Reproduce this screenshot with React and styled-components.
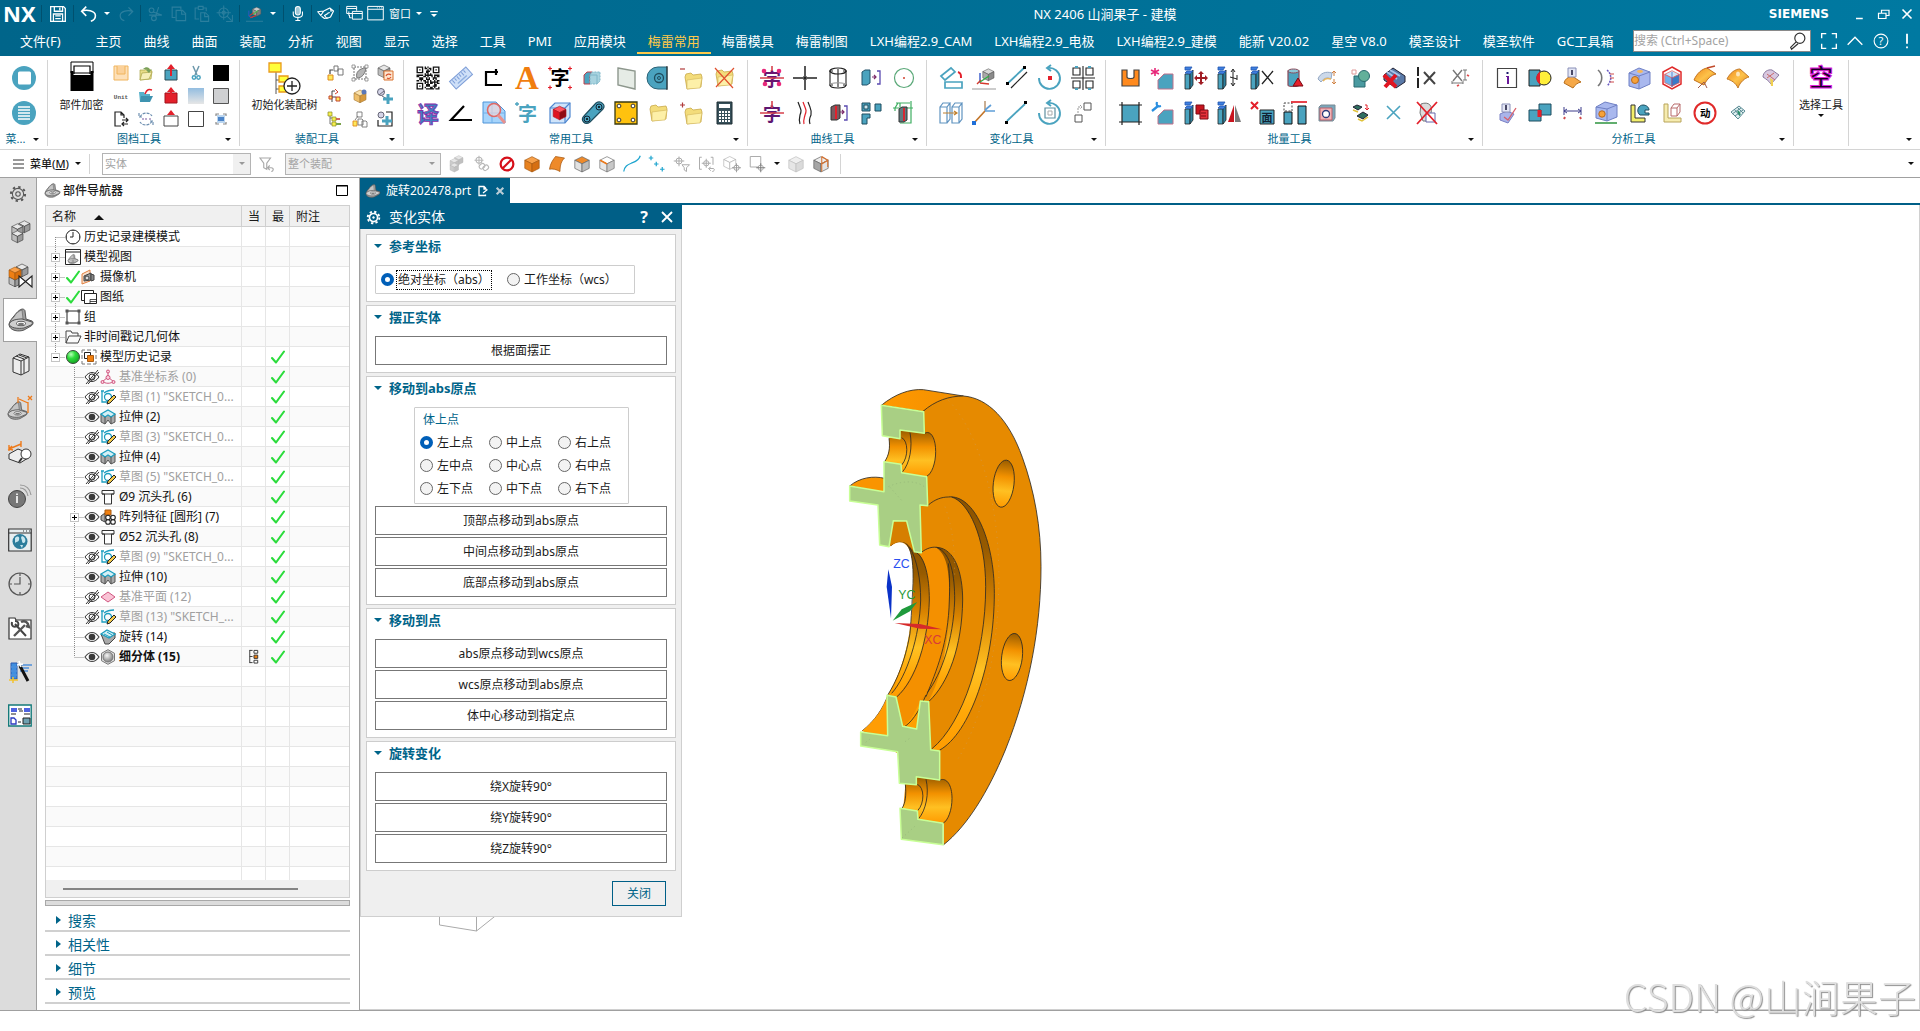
import React from "react";
import styled, { createGlobalStyle, css } from "styled-components";

const sans = `"Noto Sans", "Noto Sans CJK SC", sans-serif`;
const T = "#4aa3bf";
const K = "#222";
const R = "#e3202b";
const DEEP = "#005f87";

const Global = createGlobalStyle`
  *, *::before, *::after { box-sizing: border-box; }
  html, body { margin: 0; height: 100%; background: #fff; }
  body { font: 12px/16px ${sans}; color: #1a1a1a; overflow: hidden; }
  button, input, select { font: inherit; color: inherit; margin: 0; }
  svg { display: block; flex: none; }
`;

/* ---------- drawing helpers ---------- */

const Cube = ({ top = "#e8e8e8", left = "#bdbdbd", right = "#9a9a9a", line = "#555", t }) => (
  <g transform={t} stroke={line} strokeWidth="0.8" strokeLinejoin="round">
    <path d="M12 4l8 4-8 4-8-4z" fill={top} />
    <path d="M4 8l8 4v9l-8-4z" fill={left} />
    <path d="M20 8l-8 4v9l8-4z" fill={right} />
  </g>
);

const Slab = () => (
  <g stroke="#222" strokeWidth="0.8">
    <path d="M1 8h5v15H1z" fill={T} />
    <path d="M6 8l3-4v15l-3 4z" fill="#2c7f9c" />
    <path d="M1 1h7l-2 3H1z M1 7l2-2h6L6 8z" fill="#3e7fe0" stroke="#2257b0" />
  </g>
);

const Folder = ({ t }) => (
  <g transform={t}>
    <path d="M4 9l1-3 5-1 2 2 8-1 1 3-1 10-14 2z" fill="#f3dc7a" stroke="#c9a94a" strokeWidth="0.8" />
    <path d="M6 12l15-2-2 10-13 1z" fill="#fdf0a8" stroke="#d2b65a" strokeWidth="0.6" />
  </g>
);

const qrCells = [];
for (let y = 0; y < 17; y += 1) {
  for (let x = 0; x < 17; x += 1) {
    const inFinder = (x < 6 && y < 6) || (x > 10 && y < 6) || (x < 6 && y > 10);
    if (!inFinder && (x * 7 + y * 11 + x * y * 3) % 5 < 3 && (x + y * 2) % 7 !== 3) {
      qrCells.push(`M${x} ${y}h1v1h-1z`);
    }
  }
}
const finder = (x, y) => `M${x} ${y}h5v5h-5z M${x + 1} ${y + 1}v3h3v-3z M${x + 2} ${y + 2}h1v1h-1z`;

const Bracket3d = ({ t }) => (
  <g transform={t} stroke="#4a4a4a" strokeWidth="0.9" strokeLinejoin="round">
    <path d="M0 17c0-3 3-7 5-9 3-4 5-6 8-7 2 0 3 1 3 2l1 8 6 2c2 1 1 4-1 5l-7 4c-5 2-14 1-15-5z" fill="#a0a0a0" />
    <path d="M5 9c2-4 5-6 8-7l1 9-8 1c-2 0-3 1-5 3 0-2 2-4 4-6z" fill="#c4c4c4" strokeWidth="0.5" />
    <path d="M0 16c2-4 8-5 13-5l10 3c1 1 0 2-1 3l-7 3c-6 1-14 0-15-4z" fill="#cfcfcf" />
    <ellipse cx="12" cy="15.500" rx="4.500" ry="2.200" fill="#fff" />
    <ellipse cx="12" cy="16" rx="3" ry="1.300" fill="#777" stroke="none" />
  </g>
);

const glyph = (ch, x, y, size, fill, extra) => (
  <text x={x} y={y} fontSize={size} fill={fill} fontFamily='"Noto Sans CJK SC", sans-serif' fontWeight="700" {...extra}>
    {ch}
  </text>
);

const I = {
  /* title bar */
  save: <g fill="none" stroke="#fff" strokeWidth="1.4"><path d="M4 4h14l2 2v14H4z" /><path d="M8 4v5h9V4M14 5v3M7 20v-8h10v8M9 14h6M9 17h6" /></g>,
  undo: <path d="M4 9c5-2 15-1 15 5 0 3-2 5-5 6M9 4L4 9l5 5" fill="none" stroke="#fff" strokeWidth="1.7" />,
  redo: <path d="M20 9c-5-2-15-1-15 5 0 3 2 5 5 6M15 4l5 5-5 5" fill="none" stroke="#2b7f9e" strokeWidth="1.5" />,
  cut: <g fill="none" stroke="#2b7f9e" strokeWidth="1.4"><circle cx="7" cy="8" r="3" /><circle cx="10" cy="18" r="3" /><path d="M9 10l11 4M12 16l4-12M4 14h16" /></g>,
  copy: <g fill="none" stroke="#2b7f9e" strokeWidth="1.4"><path d="M15 7V4H4v13h4M9 8h8l4 4v9H9z M16 8v5h5" /></g>,
  paste: <g fill="none" stroke="#2b7f9e" strokeWidth="1.4"><path d="M8 5H4v14h5M14 5h4v4M8 3h6v4H8zM11 11h6l4 4v7H11z M16 11v5h5" /></g>,
  target: <g fill="none" stroke="#2b7f9e" strokeWidth="1.3"><circle cx="11" cy="11" r="6" /><circle cx="11" cy="11" r="2" /><path d="M11 2v18M2 11h18M14 22h8v-8M15 15l6 6" /></g>,
  cmdBox: <g><Cube top="#c9c9c9" left="#9a9a9a" right="#7d7d7d" t="translate(6 0) scale(.75)" /><path d="M4 8v8l6 2" stroke="#3456c9" fill="none" strokeWidth="1.2" /><path d="M6 18l8-3M5 15l6-4" stroke="#d63a2c" strokeWidth="1.6" /><path d="M10 13l7-5" stroke="#46c24c" strokeWidth="1.5" /><path d="M0 23h24" stroke="#3f88a3" /></g>,
  mic: <g fill="none" stroke="#fff" strokeWidth="1.5"><rect x="9" y="2" width="7" height="12" rx="3.5" fill="#9fc7d6" /><path d="M6 9v4c0 6 13 6 13 0V9M12.500 17v4M9 22h7" /></g>,
  tag: <g fill="none" stroke="#fff" strokeWidth="1.6" strokeLinejoin="round"><path d="M1 9l8-1-4 6zM6 15l4 3 4-1M9 8l8-4 5 4-4 8-5 2-3-4 5-3M14 11l3-1M18 5l1 4" /></g>,
  winCascade: <g fill="none" stroke="#fff" strokeWidth="1.4"><path d="M9 12H1V2h14v6M1 5h14" /><path d="M9 9h14v11H9z M9 12h14" fill="#006b90" /><path d="M5 14v4h3M4 9v6" /></g>,
  winSingle: <g fill="none" stroke="#fff" strokeWidth="1.4"><path d="M1 2h22v19H1z M1 6h22" /><path d="M14 4h1M17 4h1M20 4h1" /></g>,
  overflow: <path d="M7 8h10v1.500H7z M8 12h8l-4 4z" fill="#fff" />,
  minimize: <path d="M8 17h9v2H8z" fill="#fff" />,
  restore: <g fill="none" stroke="#fff" strokeWidth="1.6"><path d="M6 11h10v7H6zM10 11V7h10v7h-4" /></g>,
  close: <path d="M6 6l12 12M18 6L6 18" stroke="#fff" strokeWidth="2.200" />,
  /* tab bar */
  fullscreen: <path d="M4 9V4h5M15 4h5v5M20 15v5h-5M9 20H4v-5" fill="none" stroke="#fff" strokeWidth="1.500" />,
  collapse: <path d="M4 16l8-8 8 8" fill="none" stroke="#fff" strokeWidth="1.500" />,
  help: <g><circle cx="12" cy="12" r="7.500" fill="none" stroke="#fff" strokeWidth="1.200" /><text x="12" y="16.500" textAnchor="middle" fontSize="12" fill="#fff" fontFamily="Noto Sans">?</text></g>,
  alert: <path d="M11 4h2v11h-2z M11 18h2v2h-2z" fill="#fff" />,
  search: <g fill="none" stroke="#333" strokeWidth="1.300"><circle cx="14" cy="9" r="5.500" /><path d="M10 13l-6 6 1 2 7-6" /></g>,
  /* first group */
  discSquare: <g><circle cx="12" cy="12" r="12" fill={T} /><rect x="6" y="5.500" width="13" height="13" rx="1.500" fill="#fff" /></g>,
  discList: <g><circle cx="12" cy="12" r="12" fill={T} /><path d="M6 6h12M6 9h12M6 12h12M6 15h12M6 18h12" stroke="#fff" strokeWidth="1.700" /></g>,
  lock: <g><path d="M1 0h22v11H1z" fill="#fff" stroke="#000" /><path d="M4 12V4h16v8" fill="none" stroke="#000" strokeWidth="1.200" /><path d="M.500 9h3v4h17V9h3v20H.500z" fill="#000" /></g>,
  tray: <g stroke="#f0b45c"><path d="M1 1h14v14H1z" fill="#fde0b8" /><path d="M4 1v8h8V1" fill="#fbd19a" /></g>,
  openGreen: <g><path d="M2 5h5l3-2 4 3-1 8-11 1z" fill="#e8dd88" stroke="#a9a448" strokeWidth=".7" /><path d="M4 8l10-1-3 7-9 1z" fill="#f6efb8" stroke="#a9a448" strokeWidth=".7" /><path d="M5 4c3-3 6-2 7 1l2-1-3 4-3-3h2z" fill="#79a05a" /></g>,
  upTeal: <g><path d="M2 5h12v10H2z" fill={T} stroke="#2a4a55" /><path d="M8 11V3" stroke={R} strokeWidth="2" /><path d="M4 4l4-5 4 5z" fill={R} /></g>,
  upRed: <g><path d="M2 5h12v10H2z" fill={R} stroke="#a0101a" /><path d="M4 4l4-5 4 5z" fill={R} /><path d="M7 3h2v4H7z" fill={R} /></g>,
  upWhite: <g><path d="M1 5h14v10H1z" fill="#fff" stroke="#444" /><path d="M4 4l4-5 4 5z" fill={R} /></g>,
  scissors: <g fill="none" stroke={T} strokeWidth="1.500"><path d="M5 1l4 9M11 1L7 10" stroke="#6c98ab" /><circle cx="6" cy="12.500" r="1.700" /><circle cx="10.500" cy="12.500" r="1.700" /></g>,
  black: <path d="M0 0h16v16H0z" />,
  unit: <text x="8" y="11" textAnchor="middle" fontSize="6" fontWeight="700" fill="#555" fontFamily="Liberation Mono">Unit</text>,
  openTeal: <g><path d="M1 4h5l1 2h5v8H2z" fill="#57b1cb" /><path d="M3 8h12l-3 6H2z" fill="#3e93b0" /><path d="M7 6c2-5 4-5 7-4" fill="none" stroke={R} strokeWidth="1.500" /></g>,
  gradBox: <path d="M0 0h16v16H0z" fill="url(#skyGrad)" />,
  grayBox: <path d="M.500 .500h15v15H.500z" fill="#cfd0d2" stroke="#555" />,
  whiteBox: <path d="M.500 .500h15v15H.500z" fill="#fff" stroke="#444" />,
  docExport: <g fill="none" stroke={K} strokeWidth="1.200"><path d="M8 15H2V1h6l3 3v3M8 1v3h3M9 9h6M13 7l2 2-2 2M15 13H9M11 11l-2 2 2 2" /></g>,
  cycle: <g fill="none" stroke="#6d8fb0" strokeWidth="1.200"><path d="M2 6a7 7 0 0112-1M14 10a7 7 0 01-12 1M1 2v4h4M15 14v-4h-4" strokeDasharray="3 1" /><path d="M4 8h2M7 8h2M11 8h2" stroke="#7a5aa0" /></g>,
  fitBox: <g><path d="M4 4h8v8H4z" fill="#bcd6ef" /><path d="M5 6h6v4H5z" fill="#4c84c8" /><path d="M3 5V3h3M10 3h3v2M13 11v2h-3M6 13H3v-2" fill="none" stroke="#888" strokeWidth="1.200" /></g>,
  asmTree: <g><path d="M8 10v22M8 18h8M8 27h8" stroke="#555" fill="none" /><path d="M1 1h12v9H1z M11 14h9v6h-9z M11 24h9v6h-9z" fill="#ffff3a" stroke="#e99b1d" strokeWidth="1.300" /><circle cx="24" cy="24" r="8" fill="#fff" stroke={K} strokeWidth="1.300" /><path d="M19 24h10M24 19v10" stroke={K} strokeWidth="1.300" /></g>,
  asmMove: <g><path d="M1 10h5v5H1z" fill="#ffe95a" stroke="#e08a1d" /><path d="M7 1h4v5H7zM11 4h5v6h-5z" fill="#fff" stroke="#777" /><path d="M3 9V5h3" fill="none" stroke="#444" strokeWidth="1.200" /></g>,
  asmFrame: <g><path d="M2 2h12v12H2z" fill="none" stroke="#777" strokeDasharray="2 1" /><path d="M5 13c-2-6 3-10 9-10-1 6-4 10-9 10z" fill="#b5b5b5" stroke="#777" /><path d="M0 0h3v3H0zM13 0h3v3h-3zM0 13h3v3H0zM13 13h3v3h-3z" fill="#fff" stroke="#777" strokeWidth=".7" /></g>,
  asmRefresh: <g><Cube t="translate(-2 -3) scale(.75)" /><path d="M7 6h9v9H7z" fill="#fde5cf" stroke="#d9722e" /><path d="M9 11a3 3 0 015-1M14 12a3 3 0 01-4 1" fill="none" stroke="#d9532e" strokeWidth="1.200" /></g>,
  asmLink: <g fill="none" stroke="#444"><path d="M5 14V3h3M5 9h4" /><path d="M8 1l3 3-3 2" stroke="#d0402e" /><path d="M2 8h3v3H2zM9 9h4v4H9z" fill="#ffe95a" stroke="#c0402e" /></g>,
  asmGold: <g><Cube top="#fbe3ae" left="#eebf6c" right="#d79a3e" line="#a67b38" t="translate(-1 -1) scale(.75)" /><circle cx="12" cy="4" r="2.500" fill="#5a78b8" /></g>,
  asmPlus: <g><circle cx="4" cy="4" r="3.500" fill="#d5d5e8" stroke="#667" /><path d="M2 7l5-4M5 8l7 4" stroke="#667" /><path d="M11 6v10M6 11h10" stroke={T} strokeWidth="3" /></g>,
  asmRows: <g><path d="M3 3v10h4M3 7h4" fill="none" stroke="#777" /><path d="M1 1h4v4H1zM5 6h4v4H5zM5 11h4v4H5z" fill="#f6ef4a" stroke="#888a2a" strokeWidth=".7" /><path d="M9 8h4" stroke="#c0402e" strokeWidth="1.500" /><path d="M9 13h5" stroke="#7ba24a" strokeWidth="2" /></g>,
  asmCopy: <g stroke="#777" strokeWidth=".9"><path d="M5 1h5v5H5z" fill="#fff" /><path d="M1 10h4v5H1z" fill="#ffe95a" stroke="#e08a1d" /><path d="M6 8h4l1 1v5H6zM10 10h4l1 1v5h-5z" fill="#fff" /><path d="M3 9l3-4" /></g>,
  asmPlusBox: <g><path d="M9 1h6v14H1V9" fill="none" stroke={K} strokeWidth="1.200" /><circle cx="4" cy="4" r="3" fill="#d5d5e8" stroke="#667" /><path d="M10 5v9M5 10h10" stroke={T} strokeWidth="3" /></g>,
  /* common tools */
  qr: <g transform="translate(.500 .500) scale(1.353)"><path d={qrCells.join("") + finder(0, 0) + finder(12, 0) + finder(0, 12)} fillRule="evenodd" fill="#111" /></g>,
  ruler: <g transform="rotate(-42 12 12)"><path d="M1 7h22v10H1z" fill="#cfe0f8" stroke="#7f9fd8" /><path d="M4 8v4M7 8v3M10 8v4M13 8v3M16 8v4M19 8v3" stroke="#7f9fd8" /><path d="M6 14h12" stroke="#8fb0e0" strokeWidth="1.500" /></g>,
  cornerLine: <path d="M14 6H4v13h16M14 3v6M11 6h5" fill="none" stroke="#000" strokeWidth="2.200" />,
  letterA: <text x="12" y="23" textAnchor="middle" fontSize="33" fill="#f07d0f" fontFamily="Liberation Serif" fontWeight="700">A</text>,
  ziBlack: <g>{glyph("字", 2.5, 19, 19, "#000")}<path d="M0 2.500h4M2 .500v4M20 2.500h4M22 .500v4M0 21.500h4M2 19.500v4M20 21.500h4M22 19.500v4" stroke={R} strokeWidth="1.200" /></g>,
  blockSplit: <g><path d="M3 9l3-3h5l-2 3v9H3z" fill={T} stroke="#c0404a" /><path d="M9 9l2-3h8v9l-3 3H9z" fill="#a8d3df" stroke="#7fb6c8" strokeDasharray="2 1" /><path d="M9 9h7v9" stroke="#7fb6c8" fill="none" /></g>,
  sheet: <path d="M4 2l17 3v18L4 19z" fill="#e6ece6" stroke="#8d978d" strokeWidth="1.400" />,
  gearTeal: <g><path d="M11 1h9v22h-9A11 11 0 0111 1z" fill={T} stroke="#2b6276" /><circle cx="12" cy="12" r="4.500" fill="none" stroke="#1f4d5e" strokeWidth="1.300" /><circle cx="12" cy="12" r="1.500" fill="none" stroke="#1f4d5e" /><path d="M20 0v24" stroke="#222" /></g>,
  folderMinus: <g><Folder t="translate(1 2)" /><path d="M0 3h5" stroke="#b03a3a" strokeWidth="1.200" /></g>,
  folderX: <g><Folder t="translate(-1 -1)" /><path d="M2 2l18 20M21 2L3 21" stroke="#e0502e" strokeWidth="1.200" /></g>,
  yi: glyph("译", 1, 20.5, 22, "#3f7fc0", { stroke: "#8a2aa8", strokeWidth: ".8" }),
  angle: <path d="M15 5L2 19h21" fill="none" stroke="#000" strokeWidth="2.200" />,
  zoomSheet: <g><path d="M1 1h13l9 9v12H1z" fill="#a6d4fb" stroke="#4f94d8" /><path d="M1 12h22M10 1v21" stroke="#6fb0ea" /><circle cx="12" cy="9" r="6.500" fill="#fbd9d6" fillOpacity=".6" stroke="#e06a66" strokeWidth="1.600" /><path d="M16 14l7 8" stroke="#e8918e" strokeWidth="3" /></g>,
  ziTeal: <g>{glyph("字", 3, 20, 19, T)}<path d="M0 3h4M2 1v4" stroke={T} strokeWidth="1.300" /></g>,
  cubeRed: <g><path d="M2 7l5-5h15v14l-5 6H2z" fill="#cfe4fa" stroke="#4f87d0" strokeWidth="1.200" /><path d="M2 7h15v15M17 7l5-5" fill="none" stroke="#4f87d0" strokeWidth="1.200" /><Cube top="#ff5560" left="#e01522" right="#8f0a14" line="#b0101a" t="translate(2 2) scale(.8)" /></g>,
  link: <g><path d="M3 15L15 2c5-3 10 2 7 6L9 21c-5 4-10-2-6-6z" fill={T} stroke="#1f4d5e" strokeWidth="1.200" /><circle cx="18" cy="6" r="3" fill="none" stroke="#123" /><circle cx="6" cy="18" r="3" fill="none" stroke="#123" /><circle cx="18" cy="6" r="1" /><circle cx="6" cy="18" r="1" /></g>,
  plateYellow: <g><path d="M1 1h22v22H1z" fill="#ffc20e" stroke="#3a3a10" strokeWidth="1.300" /><g fill="#fff" stroke="#333"><circle cx="5" cy="5" r="1.900" /><circle cx="19" cy="5" r="1.900" /><circle cx="5" cy="19" r="1.900" /><circle cx="19" cy="19" r="1.900" /></g></g>,
  folder: <Folder t="translate(-1 -1)" />,
  folderPlus: <g><Folder t="translate(1 2)" /><path d="M0 4h5M2.500 1.500v5" stroke="#b03a3a" strokeWidth="1.200" /></g>,
  calc: <g><path d="M4 1h15v22H4z" fill="#37505a" stroke="#1f2f35" /><path d="M6 3h11v4H6z" fill="#fff" /><path d="M6 10h2v2H6zm3 0h2v2H9zm3 0h2v2h-2zm3 0h2v2h-2zM6 13h2v2H6zm3 0h2v2H9zm3 0h2v2h-2zm3 0h2v2h-2zM6 16h2v2H6zm3 0h2v2H9zm3 0h2v2h-2zm3 0h2v2h-2zM6 19h2v2H6zm3 0h2v2H9zm3 0h2v2h-2zm3 0h2v2h-2z" fill="#fff" /></g>,
  /* curve tools */
  ziStar: <g>{glyph("字", 3, 20, 18, "#6a1570")}<path d="M0 12h24M12 0v5" stroke="#d6414e" strokeWidth="1.600" /><g fill="#e8287a"><circle cx="4" cy="5" r="2.300" /><circle cx="19" cy="5" r="2.300" /><circle cx="5" cy="18" r="2.300" /><circle cx="19" cy="18" r="2.300" /></g></g>,
  ziCross: <g>{glyph("字", 3, 20, 18, "#5f1570")}<path d="M0 12h24M12 0v7" stroke="#d6414e" strokeWidth="1.600" /></g>,
  crossLines: <path d="M0 12h10M14 12h10M12 0v10M12 14v10M11 11h2v2h-2z" stroke={K} strokeWidth="1.500" />,
  cylinder: <g fill="none" stroke={K} strokeWidth="1.100"><ellipse cx="12" cy="5" rx="8" ry="3" /><path d="M4 5v14c0 4 16 4 16 0V5M3 5h4M17 5h4M3 19h4M17 19h4M12 3v18" /><path d="M4 19c0-3 16-3 16 0" stroke="#999" /></g>,
  slabTeal: <g><path d="M3 6l3-2h5v13l-3 2H3z" fill={T} stroke="#23536a" /><path d="M13 11h4M15 9l2 2-2 2" stroke="#7a2a6a" fill="none" strokeWidth="1.200" /><path d="M18 5h3v13h-3" fill="none" stroke="#5a4ab0" strokeWidth="1.300" /></g>,
  slabRed: <g><path d="M5 6l4-2h5v13l-3 2H5z" fill="#7a5a60" stroke="#333" /><path d="M10 5v13" stroke={R} strokeWidth="2" /><path d="M14 11h4M16 9l2 2-2 2" stroke="#7a2a6a" fill="none" strokeWidth="1.200" /><path d="M18 5h3v14h-3" fill="none" stroke="#5a4ab0" strokeWidth="1.300" /></g>,
  circleGreen: <g><circle cx="12" cy="12" r="9.500" fill="none" stroke="#5aa878" strokeWidth="1.200" /><circle cx="12" cy="12" r="1" fill="#d0402e" /></g>,
  waves: <g fill="none" strokeWidth="1.200"><path d="M5 1c3 8 4 8 2 13-1 4-1 6 0 9" stroke={K} /><path d="M10 1c3 8 4 8 2 13-1 4-2 6-1 9" stroke={R} /><path d="M15 1c3 8 4 8 3 13-2 4-2 6-1 9" stroke={K} /></g>,
  lBlocks: <g fill={T} stroke="#1f4d5e"><path d="M3 2h8v8H3zM16 3h6v7h-6zM3 13h8v4H8v6H3z" /><path d="M5 4h4v4H5z" fill="#cde6ee" /></g>,
  slabGreen: <g><path d="M1 7h20M4 2h14M6 2L3 7v3M8 2v4M19 0v22H8" stroke="#3fae62" fill="none" strokeWidth="1.200" /><path d="M7 8l3-2h5v13l-3 2H7z" fill="#5f7a80" stroke="#333" /><path d="M12 7v13" stroke={R} strokeWidth="1.800" /></g>,
  /* transform tools */
  rotateBox: <g fill="#fff" stroke={T} strokeWidth="1.700"><path d="M6 16h17v6H6z" /><path d="M2 10L12 2l4 4L6 14z" /><path d="M19 6c3 1 3 3 3 6" fill="none" stroke={R} strokeWidth="2" /></g>,
  axesBox: <g><Cube top="#d8d8d8" left="#a9a9a9" right="#8a8a8a" t="translate(8 0) scale(.7)" /><path d="M8 7v10" stroke="#3456c9" strokeWidth="1.400" /><path d="M8 17l9 1M5 18l4-4" stroke="#d63a2c" strokeWidth="1.400" /><path d="M8 16l9-6" stroke="#2fae44" strokeWidth="1.400" /><path d="M0 23h24" stroke="#999" /></g>,
  parallel: <g><path d="M2 18L19 2" stroke={T} strokeWidth="1.800" /><path d="M6 22L22 6" stroke={K} strokeWidth="1.200" /><path d="M1 16h3v3H1zM18 0h3v3h-3z" /></g>,
  rotateDot: <g fill="none" stroke={T} strokeWidth="1.900"><path d="M10 2A10.500 10.500 0 11 1 12" /><path d="M13 -1l-4 3 4 3" /><path d="M10 10h4v4h-4z" fill={R} stroke="none" /></g>,
  mirror4: <g fill="none" stroke={K} strokeWidth="1.100"><path d="M12 0v24M0 12h24" /><path d="M2 2h7v7H2zM15 2h7v7h-7zM2 15h7v7H2zM15 15h7v7h-7z" fill="#fff" /><path d="M4 1h3M17 1h3M4 23h3M17 23h3" stroke={T} strokeWidth="1.800" /></g>,
  frames: <g fill="none" stroke="#5f93c0" strokeWidth="1.200"><path d="M1 6h7v16H1zM1 6l3-4h7l-3 4M11 2v16l-3 4M13 6h7v16h-7zM13 6l3-4h7l-3 4M23 2v16l-3 4" /><path d="M4 12h13M15 10l3 2-3 2" stroke="#c0802e" /></g>,
  axisOrange: <g strokeWidth="1.700" fill="none"><path d="M2 22L13 10" stroke="#c2752a" /><path d="M13 0v10" stroke="#c0a080" /><path d="M13 10h10M13 9l6-5" stroke="#5f9fd8" /><path d="M0 20h4v4H0z" fill="#1f6fd8" stroke="none" /></g>,
  lineSeg: <g><path d="M2 20L20 3" stroke={T} strokeWidth="1.800" /><path d="M0 20h3v3H0zM19 0h3v3h-3z" /></g>,
  rotateBoxed: <g fill="none" stroke={T} strokeWidth="1.900"><path d="M10 2A10.500 10.500 0 11 1 12" /><path d="M13 -1l-4 3 4 3" /><path d="M7 7h10v10H7z" stroke="#5f8fa0" strokeWidth="1.200" /><path d="M10 10h4v4h-4z" stroke="#aaa" strokeWidth="1" /></g>,
  moveBoxes: <g fill="none" stroke="#555"><path d="M13 2h7v7h-7zM4 14h7v7H4z" /><path d="M7 12V6h4M9 4l2 2-2 2" stroke="#999" strokeDasharray="2 1" /></g>,
  /* batch tools */
  notch: <path d="M4 4h5v7c0 2 7 2 7 0V4h5v16H4z" fill="#ff8a1e" stroke="#444" strokeWidth="1.200" />,
  chamferStar: <g><path d="M7 23V14l6-6h9v15z" fill={T} stroke="#c0708a" /><path d="M4 2v8M0 4l8 4M8 4L0 8" stroke="#e8287a" strokeWidth="1.600" /></g>,
  slabMove: <g><Slab /><path d="M17 5l3 3h-2v3h3V9l3 3-3 3v-2h-3v3h2l-3 3-3-3h2v-3h-3v2l-3-3 3-3v2h3V8h-2z" fill="#a01c24" /></g>,
  slabDim: <g><Slab /><path d="M16 4v15M14 6l2-3 2 3M14 17l2 3 2-3M13 11l7 2M20 9v5" stroke={K} fill="none" /></g>,
  slabX: <g><Slab /><path d="M12 5l11 13M23 5L12 18" stroke={K} strokeWidth="1.300" /></g>,
  canister: <g><path d="M5 5v14c0 2 11 2 11 0V5z" fill={T} stroke="#8a4a5a" strokeWidth="1.200" /><ellipse cx="10.500" cy="5" rx="5.500" ry="2" fill="#8cc7d8" stroke="#8a4a5a" /><path d="M15 12l5 8H10z" fill={R} stroke="#7a0a14" /></g>,
  surface: <g><path d="M2 13c2-6 8-8 14-6l-1 6c-4-2-7-1-10 3z" fill="#ccd9ea" stroke="#93a8c4" /><path d="M7 15c2-3 5-3 8-2" stroke="#e8b45a" fill="none" strokeWidth="1.500" /><path d="M18 6v4M16 7l2-2 2 2M18 13v5M16 16l2 2 2-2" stroke="#d08040" fill="none" /></g>,
  shapes: <g><path d="M5 10h11v11H5z" fill="#4a9aa0" stroke="#2a6a70" /><circle cx="15" cy="10" r="5.500" fill="#62b09a" stroke="#2a6a70" /><path d="M3 4h4v4H3z" fill="none" stroke="#e09a9a" /></g>,
  printX: <g><path d="M2 9l9-7 12 8v6l-9 6L2 14z" fill="#5a7aa8" stroke="#223" /><path d="M8 4l10 6M5 6l10 7" stroke="#a9c4e8" strokeWidth="2" /><path d="M2 9l12 12M14 9L3 21" stroke="#e01522" strokeWidth="4" /></g>,
  barX: <g stroke={K}><path d="M3 1v9M3 12v10" strokeWidth="2" /><path d="M9 6l11 12M20 6L9 18" strokeWidth="2" stroke="#444" /></g>,
  xDim: <g stroke="#777" fill="none"><path d="M5 4l9 11M14 4L5 15" strokeWidth="1.400" /><path d="M15 4h4M17 4v10M15 14h4M4 17h11M4 15v3M15 15v3" /><path d="M19 9l2 1M9 20l2-1" stroke="#e04a4a" strokeWidth="1.800" /></g>,
  squareCross: <g><path d="M4 4h17v17H4z" fill={T} /><path d="M1 4h23M1 21h23M4 1v23M21 1v23" stroke={K} strokeWidth="1.200" /></g>,
  chamferWrench: <g><path d="M7 23V15l6-6h9v14z" fill={T} stroke="#c0708a" /><path d="M1 10l6-5M6 1c-1 3 0 5 4 4" stroke="#2a8fe0" strokeWidth="2.300" fill="none" /></g>,
  slabCopy: <g><Slab /><path d="M12 4h8v9h-8z" fill="#c8141e" stroke="#7a0a14" /><path d="M16 9h8v9h-8z" fill="#e8323c" stroke="#7a0a14" /><path d="M17 12h5M17 15h5" stroke="#7a0a14" /></g>,
  slabMirror: <g><Slab /><path d="M17 4v17H11z" fill="#c8141e" /><path d="M18 4v17h6z" fill="#7a7a7a" /></g>,
  faceX: <g><path d="M10 9h14v14H10z" fill={T} stroke="#222" />{glyph("面", 11.5, 20.5, 11, "#123")}<path d="M1 1l7 7M8 1L1 8" stroke={R} strokeWidth="2" /></g>,
  twoCols: <g><path d="M1 11h8v12H1zM15 5h8v18h-8z" fill={T} stroke="#111" /><path d="M1 2h8v8H1z" fill="none" stroke="#444" strokeDasharray="2 1.500" /><path d="M8 1h16" stroke={R} strokeWidth="1.700" /></g>,
  plateDot: <g><path d="M3 6l2-2h14v13l-2 3H3z" fill="#7aa7bb" stroke="#7a8a94" /><path d="M4 7h12v12H4z" fill="#f3b3b6" stroke="#b8606a" /><circle cx="10" cy="13" r="3.500" fill="#fff" stroke="#2a3a7a" strokeWidth="1.300" /></g>,
  stack: <g><path d="M4 6l4-2 5 2-4 3zM8 15l6-4 5 3-5 4z" fill="#2f6f60" stroke="#223" /><path d="M4 9l5 2M9 18l4 2 6-4" stroke="#e0c23a" fill="none" strokeWidth="1.500" /><path d="M16 4h2v4M16 7l2 2 2-2" stroke={R} fill="none" /></g>,
  xTeal: <path d="M5 5l13 13M18 5L5 18" stroke={T} strokeWidth="1.600" />,
  docX: <g><path d="M6 3c8-3 12 2 10 9v8H8l-3-8z" fill="#dcdcdc" stroke="#777" /><path d="M11 12h9v9h-9z" fill="#fff" stroke="#66a" /><path d="M2 1l20 22M22 1L2 23" stroke={R} strokeWidth="1.800" /></g>,
  /* analysis tools */
  infoBox: <g><path d="M2.500 2.500h19v19h-19z" fill="#fff" stroke="#444" strokeWidth="1.200" /><path d="M11 10h3v8h-2v-7h-1z" fill="#6a1a9a" /><path d="M11.500 6h2v2h-2z" fill="#1a1a6a" /></g>,
  overlap: <g><path d="M1 4h11v16H1z" fill={T} stroke="#222" /><circle cx="16" cy="12" r="7" fill="#ffef3a" stroke="#222" /><path d="M12 5.500c-5 4-5 9 0 13z" fill={R} /></g>,
  orangeInfo: <g><path d="M3 17c1-4 4-6 8-7l9 6c-4 1-6 3-8 6z" fill="#f5a848" stroke="#b8701e" /><path d="M7 2h8v9H7z" fill="#e3e6f5" stroke="#8a90b8" /><path d="M11 4v5" stroke="#224" strokeWidth="1.600" /></g>,
  arcs: <g fill="none"><path d="M4 4c5 4 5 11 0 16" stroke="#777" strokeWidth="1.600" /><path d="M13 4c5 4 5 11 0 16" stroke="#6a5ac0" strokeWidth="1.500" strokeDasharray="2 1" /><path d="M16 8h4M16 12h4M16 16h4" stroke="#d04a4a" strokeWidth="1.200" /></g>,
  blueCube: <g><path d="M2 7l10-5 11 4v12l-11 5-10-3z" fill="#a9b8ee" stroke="#6f80c4" /><path d="M2 7l10 3 11-4M12 10v13" stroke="#6f80c4" fill="none" /><circle cx="8" cy="14" r="3.500" fill="#f6a23a" stroke="#b86a1e" /><ellipse cx="13" cy="5.500" rx="3" ry="1.400" fill="#f6b85a" /></g>,
  redHex: <g><path d="M12 1l9 5v12l-9 5-9-5V6z" fill="#fff" stroke="#e02a2a" strokeWidth="1.500" /><Cube top="#c9e4fa" left="#6fb0ea" right="#3a7ac8" line="#e85a5a" t="translate(1 1) scale(.92)" /><path d="M12 6v15" stroke="#2a5ac0" strokeWidth=".7" /></g>,
  orangeSheet: <g><path d="M1 14C4 7 9 3 14 2l9 6c-5 1-9 5-12 11z" fill="url(#goldGrad)" stroke="#c2701a" /><path d="M5 22l6-6 3 6" stroke="#a05a4a" fill="none" /><path d="M14 2l8-2" stroke="#c04a2a" strokeWidth="1.300" /></g>,
  orangeSheet2: <g><path d="M1 13C4 7 9 3 14 3l9 8c-4 1-9 5-11 11-2-5-7-8-11-9z" fill="url(#goldGrad)" stroke="#c27a2a" /><ellipse cx="12" cy="8" rx="2" ry="2.500" fill="#fde5b8" /></g>,
  violetLamp: <g><path d="M4 11c0-5 5-8 9-7l7 5-8 9c-2-3-5-5-8-7z" fill="#d8c8e0" stroke="#8a7aa0" /><path d="M8 12l7-5M8 8l8 6" stroke="#c86a6a" /><path d="M11 12l3 2v6h-2z" fill="#f0d050" /></g>,
  purpleInfo: <g><path d="M5 13l7-3 7 3-6 9-8-3z" fill="#a9b4ea" stroke="#7a80c4" /><path d="M7 3h8v8H7z" fill="#e3e6f5" stroke="#8a90b8" /><path d="M11 4v5" stroke="#224" strokeWidth="1.600" /><path d="M9 16l4 3 8-12" fill="none" stroke="#d9606a" strokeWidth="1.300" /></g>,
  overlap2: <g><path d="M11 3h12v11H11zM1 9h12v11H1z" fill={T} stroke="#1f4d5e" /><path d="M9.500 9h4v7h-4z" fill={R} /></g>,
  dimLine: <g stroke="#3a3a8a" fill="none"><path d="M3 6v8M20 6v8M3 10h17" /><path d="M3 18l1-2M19 16l1 2" stroke="#d04a4a" strokeWidth="2" /><path d="M6 8l-3 2 3 2M17 8l3 2-3 2" /></g>,
  blueCube2: <g><path d="M2 6l9-5 12 3v12l-10 4-11-3z" fill="#a9b8ee" stroke="#6f80c4" /><path d="M2 6l11 2 10-4M13 8v12" stroke="#6f80c4" fill="none" /><circle cx="8" cy="13" r="3.200" fill="#f6a23a" stroke="#b86a1e" /><path d="M1 22h22" stroke="#3a9a4a" strokeWidth="1.600" /></g>,
  rulerTeal: <g><path d="M4 4h4v13h10v4H4z" fill="#f3ef6a" stroke="#333" /><path d="M12 13c-3-4 0-9 4-9 3 0 6 2 6 5h-4v3h4v2h-9z" fill={T} stroke="#1f4d5e" /></g>,
  rulerRed: <g><path d="M4 3h4v14h13v4H4z" fill="#f6ecb0" stroke="#b8a45a" /><path d="M11 7h6v8h-6zM11 7l3-4h6l-3 4M20 3v8l-3 4" fill="none" stroke="#b86a6a" /></g>,
  dong: <g><circle cx="12" cy="12" r="10.500" fill="#fff" stroke="#e02a2a" strokeWidth="2" />{glyph("动", 7, 16, 10.5, "#000")}</g>,
  wireSurf: <g fill="none" stroke="#5a8a94"><path d="M5 11l8-6 6 5-7 8z" fill="#e0f0f0" /><path d="M6 13l9-6M9 15l8-6M8 8l6 7M11 6l6 6" /><path d="M12 10l2 4" stroke="#2a8f6a" strokeWidth="2" /></g>,
  kong: <g>{glyph("空", 0, 24, 24, "#1a0020", { stroke: "#e020e0", strokeWidth: "1" })}</g>,
  /* selection bar */
  funnel: <g fill="none" stroke="#a8a8a8" strokeWidth="1.500"><path d="M4 4h14l-5 7v8l-4-2v-6z" /><path d="M15 17h4c4 0 3 5 0 5M17 14l-3 3 3 3" /></g>,
  grayBlocks: <g><Cube top="#e6e6e6" left="#ccc" right="#c0c0c0" line="#b5b5b5" t="translate(6 -2) scale(.7)" /><Cube top="#e6e6e6" left="#ccc" right="#c0c0c0" line="#b5b5b5" t="translate(0 2) scale(.7)" /><Cube top="#e6e6e6" left="#ccc" right="#c0c0c0" line="#b5b5b5" t="translate(0 8) scale(.7)" /></g>,
  chainGray: <g fill="none" stroke="#b8b8b8" strokeWidth="1.400"><circle cx="8" cy="7" r="4" /><path d="M8 1v12M2 7h12" /><rect x="8" y="12" width="8" height="6" rx="3" transform="rotate(-40 12 15)" /><rect x="13" y="14" width="8" height="6" rx="3" transform="rotate(-40 17 17)" /></g>,
  noEntry: <g fill="none" stroke="#d6101a" strokeWidth="3"><circle cx="12" cy="12" r="8.500" /><path d="M6 18L18 6" /></g>,
  solidOrange: <Cube top="#f7a049" left="#e8821f" right="#d66f12" line="#a85a12" t="translate(-2.400 -2.600) scale(1.200)" />,
  sheetOrange: <path d="M2 19C3 11 7 6 10 2l12 2c-4 4-6 9-6 18-5-3-10-4-14-3z" fill="#ee8a2a" stroke="#a85a12" />,
  faceOrange: <Cube top="#ee8a2a" left="#e2e2e2" right="#bdbdbd" line="#666" t="translate(-2.400 -2.600) scale(1.200)" />,
  edgeOrange: <g><Cube top="#fff" left="#e8e8e8" right="#c8c8c8" line="#777" t="translate(-2.400 -2.600) scale(1.200)" /><path d="M3 7l9 5" stroke="#ee7a1a" strokeWidth="2" /></g>,
  curveBlue: <path d="M1 22c1-7 5-9 10-11s10-3 12-10" fill="none" stroke="#1fa5cf" strokeWidth="1.700" />,
  pointsBlue: <path d="M1 4h6M4 1v6M8 12h6M11 9v6M16 19h6M19 16v6" stroke="#1fa5cf" strokeWidth="1.600" />,
  grayFilter: <g fill="none" stroke="#aaa" strokeWidth="1.300"><circle cx="8" cy="8" r="4" /><path d="M8 2v13M1 8h14M12 13h10l-4 4v5l-3-2v-3z" /></g>,
  grayBracket: <g fill="none" stroke="#aaa" strokeWidth="1.300"><path d="M5 3H2v16h3M17 3h3v10" /><circle cx="11" cy="11" r="3.500" /><path d="M11 5v12M5 11h12M15 18h5c3 0 2 4-1 4M17 16l-3 2 3 3" /></g>,
  grayCubePlus: <g><Cube top="#fff" left="#fff" right="#fff" line="#aaa" t="translate(-3 -2)" /><g fill="#fff" stroke="#999" strokeWidth="1.200"><circle cx="18" cy="17" r="3.500" /><path d="M18 11v12M12 17h12" /></g></g>,
  grayRectPlus: <g fill="none" stroke="#aaa" strokeWidth="1.300"><path d="M3 2h14v14H3z" /><circle cx="17" cy="17" r="3.500" fill="#fff" /><path d="M17 11v12M11 17h12" stroke="#777" /></g>,
  grayCubeFlat: <Cube top="#efefef" left="#e6e6e6" right="#dadada" line="#c0c0c0" t="translate(-2.400 -2.600) scale(1.200)" />,
  cubeCut: <g><Cube top="#ececec" left="#a5a5a5" right="#e5e5e5" line="#666" t="translate(-2.400 -2.600) scale(1.200)" /><path d="M13 2v20M13 12l8-5v9M13 2l8 5" stroke="#d9722e" fill="none" strokeWidth="1.400" /></g>,
  /* resource bar */
  gear: <g fill="none" stroke="#555"><circle cx="12" cy="12" r="3" strokeWidth="1.400" /><circle cx="12" cy="12" r="7.500" strokeWidth="1.400" /><circle cx="12" cy="12" r="9.500" strokeWidth="2.600" strokeDasharray="3.200 4.260" /></g>,
  gearWhite: <g fill="none" stroke="#fff"><circle cx="12" cy="12" r="6.500" strokeWidth="2.600" /><circle cx="12" cy="12" r="9.300" strokeWidth="3" strokeDasharray="3.600 3.700" /><circle cx="12" cy="12" r="1.500" fill="#fff" /></g>,
  navBlocks: <g><Cube t="translate(8 -2) scale(.7)" line="#333" /><Cube t="translate(1 1) scale(.7)" line="#333" /><Cube t="translate(1 8) scale(.7)" line="#333" /></g>,
  navConstraint: <g><Cube t="translate(5 -3) scale(.75)" line="#333" /><Cube t="translate(-2 7) scale(.75)" line="#333" /><Cube top="#f9a04a" left="#ee7f14" right="#d9700e" line="#a0560e" t="translate(-2 0) scale(.75)" /><path d="M11 12l13 11V12L11 23z" fill="#fff" stroke="#222" strokeWidth="1.100" /></g>,
  bracket: <Bracket3d />,
  books: <g stroke="#333" fill="#eee"><path d="M5 6l7-4 9 3v14l-8 4-8-3z" /><path d="M5 6l8 3v14M13 9l8-4M8 4l8 3v14M11 3l8 3" fill="none" /></g>,
  bracketDim: <g><Bracket3d t="translate(0 5) scale(.8)" /><path d="M10 1v6M20 6v11M11 3l9 4M20 0l4 4M24 0l-4 4" stroke="#ee7a1a" strokeWidth="1.300" fill="none" /></g>,
  measure: <g><path d="M1 14l9-5 10 4v5l-8 5-11-4z" fill="#eee" stroke="#333" /><path d="M1 11V5M1 9l12-5M13 1v6M4 6L1 9l4 1" stroke="#ee7a1a" strokeWidth="1.400" fill="none" /><circle cx="18" cy="14" r="5" fill="#fff" stroke="#333" /><path d="M14 18l-3 4" stroke="#333" strokeWidth="2" /></g>,
  info: <g><circle cx="9" cy="15" r="8.500" fill="#777" stroke="#444" /><path d="M9 12v7M9 9.500v1.500" stroke="#fff" strokeWidth="1.600" /><path d="M12 4c4 0 7 3 8 8M12 1c6 0 10 4 11 10" fill="none" stroke="#999" strokeWidth="1.200" /></g>,
  web: <g><path d="M.700 1h22.500v22H.700z" fill="#e8eef0" stroke="#333" strokeWidth="1.200" /><path d="M.700 5h22.500M15 3h1M18 3h1M21 3h1" stroke="#333" /><circle cx="12" cy="13.500" r="7.500" fill="#2b7d9c" /><path d="M7 10c3-3 5-1 4 2s-4 1-4 4M14 8c3 1 4 4 3 6s-3 1-3-1-2-3 0-5zM12 17l3 0-1 3z" fill="#c7e6ef" /></g>,
  clock: <g fill="none" stroke="#555" strokeWidth="1.200"><circle cx="12" cy="12" r="11" /><path d="M12 5v7H6M12 1v3M12 20v3M1 12h3M20 12h3" /></g>,
  wrench: <g><path d="M1 2h6l1 2h15v19H1z" fill="#fff" stroke="#333" strokeWidth="1.200" /><path d="M7 8l11 12M4 6c-1 4 2 6 5 4M7 5c3 0 4 2 3 5" stroke="#444" strokeWidth="2" fill="none" /><path d="M6 20L17 9M13 6c4-2 7 0 8 5l-3-1" stroke="#555" strokeWidth="2.400" fill="none" /></g>,
  wizard: <g><path d="M3 3h6v16H3z" fill="#3f8fe0" stroke="#2a5ab0" /><path d="M3 7h6M3 11h6M3 15h6M9 5h15M12 8h9M12 11h8" stroke="#4f90da" strokeWidth="1.400" /><path d="M12 6l8 15" stroke="#111" strokeWidth="3" /><path d="M1 20h9M5 17v6" stroke="#f2c230" strokeWidth="1.500" /><path d="M11 1l2 6M9 5l6-1" stroke="#fff" strokeWidth="1.500" /></g>,
  flow: <g><path d="M.700 1h22.500v21H.700z" fill="#fff" stroke="#157a7a" strokeWidth="1.400" /><path d="M3 4h6v4H3zM16 4h6v4h-6z" fill="#4f63e0" /><path d="M10 5h4M11 7h4M3 10h5M16 10h6M10 18h3" stroke="#222" /><path d="M3 14h3l2 2v4H3z" fill="#fff" stroke="#2a3ac0" strokeWidth="1.300" /><path d="M15 14h7v6h-7z" fill="#6fa0b0" stroke="#222" /></g>,
  /* tree, 16 unit grid */
  tClock: <g fill="none" stroke={K}><circle cx="8" cy="8" r="7" /><path d="M8 3v5H5" /><path d="M8 1v1M8 14v1M1 8h1M14 8h1" /></g>,
  tView: <g><path d="M.500 .500h15v15H.500zM.500 3h15" fill="#fff" stroke={K} /><Bracket3d t="translate(3 5) scale(.42)" /></g>,
  tCheck: <path d="M2 9l4 4.500L14 2.500" fill="none" stroke="#2bdc3c" strokeWidth="2.100" strokeLinecap="round" strokeLinejoin="round" />,
  tCamera: <g><path d="M1 5l8-4v11l-8 3z" fill="#fbe0cc" stroke="#e08040" /><path d="M3 7l7-3v7l-7 1z" fill="#9a9a9a" stroke="#444" /><circle cx="6" cy="9" r="2" fill="#ddd" stroke="#444" /><path d="M10 5l3 1v5l-3 1z" fill="#888" stroke="#444" /></g>,
  tDraw: <g fill="#fff" stroke={K}><path d="M.500 1.500h12v10H.500z" /><path d="M3.500 4.500h12v10h-12z" /><path d="M9 12.500h6M9 10.500v4M9 10.500h6" strokeWidth=".8" /></g>,
  tGroup: <g fill="#fff" stroke={K}><path d="M2 2h12v12H2z" /><path d="M.500 .500h3v3h-3zM12.500 .500h3v3h-3zM.500 12.500h3v3h-3zM12.500 12.500h3v3h-3z" fill="#555" stroke="none" /></g>,
  tFolder: <path d="M1 14V2h5l1 2h6v3M1 14l3-7h12l-3 7z" fill="none" stroke="#444" strokeLinejoin="round" />,
  tBall: <g><circle cx="8" cy="8" r="6.500" fill="url(#ballGrad)" stroke="#3a4a3a" /></g>,
  tModel: <g><path d="M1 4V1h3M12 1h3v3M15 12v3h-3M4 15H1v-3M1 6v4M15 6v4M6 1h4M6 15h4" fill="none" stroke="#777" /><path d="M3.500 3.500h6v6h-6z" fill="#fff" stroke={K} /><path d="M6.500 6.500h6v6h-6z" fill="#f08010" stroke="#a85a12" /></g>,
  tEye: <g><path d="M1 8c4-6 10-6 14 0-4 6-10 6-14 0z" fill="#fff" stroke="#444" strokeWidth="1.100" /><circle cx="8" cy="8" r="3.300" fill="#3a3a3a" /></g>,
  tEyeOff: <g fill="none" stroke="#333" strokeWidth="1"><path d="M1 8c4-6 10-6 14 0-4 6-10 6-14 0z" /><circle cx="8" cy="8" r="3" /><path d="M2 15L14 1M4 15L15 3" /></g>,
  tCsys: <g fill="none" stroke="#d0557f"><path d="M8 1v7M8 8l-6 5M8 8l6 5M2 12c3 3 9 3 12 0" /><circle cx="8" cy="2.500" r="1.500" fill="#fbd0de" /><circle cx="8" cy="8.500" r="2" fill="#fbd0de" /><circle cx="2.500" cy="13" r="1.500" fill="#fbd0de" /><circle cx="13.500" cy="13" r="1.500" fill="#fbd0de" /></g>,
  tSketch: <g fill="none"><path d="M1 2h3M2 2v11h7M4 4c4-3 7-3 10-3" stroke="#1b9dbf" strokeWidth="1.300" /><circle cx="8" cy="8" r="3.500" stroke="#1b9dbf" strokeWidth="1.300" /><path d="M7 15l1-3 6-6 2 2-6 6z" fill="#f2c84a" stroke="#222" /></g>,
  tExtrude: <g stroke="#555"><path d="M1 5v8l4 2 3-4 3 4 4-2V5z" fill="#a9a9a9" /><path d="M1 5l7-4 7 4-4 3-3-2-3 2z" fill="#d5f0f6" stroke="#1b9dbf" strokeWidth="1.200" /><path d="M5 8v7M11 8v7" /></g>,
  tHole: <path d="M2 1.500h12v3.500h-2.500V15h-7V5H2z M2 5h12" fill="#fff" stroke="#333" />,
  tPattern: <g><path d="M1 7l4-3v9l-4-2z" fill="#aaa" stroke="#444" /><path d="M5 1h6v5H5z" fill="#f08010" stroke="#a85a12" /><g fill="#fff" stroke="#222" strokeWidth="1.100"><circle cx="8" cy="8.500" r="2.300" /><circle cx="13" cy="8.500" r="2.300" /><circle cx="8" cy="13" r="2.300" /><circle cx="13" cy="13" r="2.300" /></g></g>,
  tPlane: <path d="M1 8l7-5 7 5-7 5z" fill="#f9c3d5" stroke="#d0557f" />,
  tRevolve: <g stroke="#444"><path d="M1 5l4 10 4 0 6-6V4z" fill="#a9a9a9" /><path d="M1 5l6-4 8 4-6 4z" fill="#d5f0f6" stroke="#1b9dbf" strokeWidth="1.200" /><path d="M4 5l6 3M7 3l5 3" stroke="#1b9dbf" /></g>,
  tSubdiv: <g stroke="#777"><path d="M8 .700l6.500 3.600v7.400L8 15.300 1.500 11.700V4.300z" fill="#e0e0e0" /><circle cx="8" cy="8" r="5" fill="url(#steelGrad)" /></g>,
  tCurrent: <g fill="#fff" stroke="#333"><path d="M4 1v14M4 1.500h3M4 8h3M4 14.500h3" /><path d="M8.500 1.500h4v3h-4zM8.500 12h4v3h-4z" /><path d="M8.500 6.500h4v3.500h-4z" fill="#f08010" /></g>,
  docPen: <g fill="none" stroke="#fff" strokeWidth="2.600"><path d="M17 19v2H4V3h10l4 4M14 3v5h5M12 16l9-7" /></g>,
  closeGray: <path d="M4 4l16 16M20 4L4 20" stroke="#b9ccd6" strokeWidth="5" />,
};

const VIEW = { lock: "0 0 24 29", asmTree: "0 0 34 34" };
const small = new Set(
  "tray openGreen upTeal upRed upWhite scissors black unit openTeal gradBox grayBox whiteBox docExport cycle fitBox asmMove asmFrame asmRefresh asmLink asmGold asmPlus asmRows asmCopy asmPlusBox".split(" ")
);
const Icon = ({ name, size = 24, h }) => (
  <svg
    width={size}
    height={h || size}
    viewBox={VIEW[name] || (small.has(name) || /^t[A-Z]/.test(name) ? "0 0 16 16" : "0 0 24 24")}
    overflow="visible"
    aria-hidden="true"
  >
    {I[name]}
  </svg>
);

/* ---------- shared parts ---------- */

const Shell = styled.div`
  height: 100vh;
  display: flex;
  flex-direction: column;
  background: #fff;
`;
const PlainButton = styled.button`
  border: 0;
  padding: 0;
  background: none;
  display: flex;
  align-items: center;
  justify-content: center;
`;
const Caret = styled.span`
  width: 0;
  height: 0;
  flex: none;
  border: 3px solid transparent;
  border-bottom-width: 0;
  border-top-color: ${(p) => p.$color || "#111"};
`;

/* ---------- header ---------- */

const Header = styled.header`
  background: linear-gradient(90deg, #00658a, #0079a1);
  color: #fff;
`;
const TitleBar = styled.div`
  height: 27px;
  display: flex;
  align-items: center;
`;
const Logo = styled.span`
  width: 38px;
  padding-left: 3px;
  font: 700 22px/27px ${sans};
`;
const TitleSep = styled.span`
  width: 1px;
  height: 17px;
  margin: 0 3px;
  background: #00506e;
`;
const TitleButton = styled(PlainButton)`
  width: ${(p) => p.$w || 23}px;
  height: 25px;
`;
const WindowButton = styled(PlainButton)`
  height: 25px;
  font-size: 11px;
  gap: 5px;
  padding: 0 5px 0 1px;
`;
const Title = styled.h1`
  flex: 1;
  margin: 0;
  text-align: center;
  font: 400 13px/24px ${sans};
`;
const Brand = styled.span`
  font: 700 12px/28px "DejaVu Sans", sans-serif;
  margin-right: 18px;
`;
const WinButtons = styled.div`
  display: flex;
  gap: 1px;
  padding-right: 2px;
`;

const TabBar = styled.nav`
  height: 29px;
  display: flex;
  align-items: stretch;
`;
const Tab = styled(PlainButton)`
  font-size: 13px;
  line-height: 20px;
  white-space: nowrap;
  padding: 0 11px;
  margin-bottom: 2px;
  ${(p) => p.$file && css`padding: 0 24px 0 20px;`}
  ${(p) =>
    p.$active &&
    css`
      color: #ffc94a;
      box-shadow: inset 0 -2px #ffc94a;
    `}
`;
const SearchBox = styled.label`
  width: 178px;
  height: 22px;
  margin: 3px 5px 0 auto;
  display: flex;
  align-items: center;
  background: #fff;
  border: 1px solid #8a8a8a;
  padding-right: 1px;
  input {
    flex: 1;
    min-width: 0;
    border: 0;
    padding: 0;
    outline: 0;
    background: none;
    font-size: 12px;
    color: #222;
  }
  input::placeholder { color: #a3a3a3; }
`;
const BarIcon = styled(PlainButton)`
  width: 26px;
  height: 27px;
`;

const tabs = ["主页", "曲线", "曲面", "装配", "分析", "视图", "显示", "选择", "工具", "PMI", "应用模块", "梅雷常用", "梅雷模具", "梅雷制图", "LXH编程2.9_CAM", "LXH编程2.9_电极", "LXH编程2.9_建模", "能新 V20.02", "星空 V8.0", "模圣设计", "模圣软件", "GC工具箱"];

function AppHeader() {
  return (
    <Header>
      <TitleBar>
        <Logo>NX</Logo>
        <TitleSep />
        <TitleButton $w={25} aria-label="保存"><Icon name="save" size={22} /></TitleButton>
        <TitleSep />
        <TitleButton aria-label="撤销"><Icon name="undo" size={22} /></TitleButton>
        <TitleButton $w={14} aria-label="撤销列表"><Caret $color="#fff" /></TitleButton>
        <TitleButton aria-label="重做"><Icon name="redo" size={20} /></TitleButton>
        <TitleSep />
        {["cut", "copy", "paste", "target"].map((n) => (
          <TitleButton key={n} aria-label={n}><Icon name={n} size={19} /></TitleButton>
        ))}
        <TitleSep />
        <TitleButton aria-label="重复命令"><Icon name="cmdBox" size={17} /></TitleButton>
        <TitleButton $w={14} aria-label="命令列表"><Caret $color="#fff" /></TitleButton>
        <TitleSep />
        <TitleButton $w={21} aria-label="语音"><Icon name="mic" size={17} /></TitleButton>
        <TitleSep />
        <TitleButton $w={21} aria-label="触控"><Icon name="tag" size={18} /></TitleButton>
        <TitleSep />
        <TitleButton aria-label="切换窗口"><Icon name="winCascade" size={17} /></TitleButton>
        <WindowButton><Icon name="winSingle" size={17} />窗口<Caret $color="#fff" /></WindowButton>
        <TitleButton $w={14} aria-label="自定义"><Icon name="overflow" size={18} /></TitleButton>
        <Title>NX 2406 山涧果子 - 建模</Title>
        <Brand>SIEMENS</Brand>
        <WinButtons>
          {["minimize", "restore", "close"].map((n) => (
            <TitleButton key={n} aria-label={n}><Icon name={n} size={18} /></TitleButton>
          ))}
        </WinButtons>
      </TitleBar>
      <TabBar>
        <Tab $file>文件(F)</Tab>
        {tabs.map((t) => <Tab key={t} $active={t === "梅雷常用"}>{t}</Tab>)}
        <SearchBox>
          <input aria-label="搜索" placeholder="搜索 (Ctrl+Space)" />
          <Icon name="search" size={22} />
        </SearchBox>
        {["fullscreen", "collapse", "help", "alert"].map((n) => (
          <BarIcon key={n} aria-label={n}><Icon name={n} size={22} /></BarIcon>
        ))}
      </TabBar>
    </Header>
  );
}

/* ---------- ribbon ---------- */

const Ribbon = styled.section`
  height: 94px;
  display: flex;
  padding: 4px 0 3px;
  border-bottom: 1px solid #d4d4d4;
`;
const Group = styled.div`
  display: flex;
  flex-direction: column;
  border-right: 1px solid #d4d4d4;
  padding: 0 6px 0 7px;
  ${(p) => p.$w && css`width: ${p.$w}px; padding: 0;`}
  ${(p) => p.$rest && css`flex: 1; border-right: 0; padding: 0;`}
`;
const GroupBody = styled.div`
  flex: 1;
  display: flex;
  justify-content: ${(p) => (p.$center ? "center" : "flex-start")};
`;
const GroupFoot = styled.div`
  height: 14px;
  display: flex;
  align-items: center;
  font-size: 11px;
  line-height: 14px;
  color: #006489;
  > span { flex: 1; text-align: center; }
  button { width: 10px; height: 14px; }
  padding: ${(p) => (p.$wide ? "0 6px 0 0" : "0")};
`;
const IconGrid = styled.div`
  display: grid;
  grid-auto-flow: row;
  grid-template-columns: repeat(${(p) => p.$cols}, ${(p) => (p.$small ? 25 : 33)}px);
  grid-auto-rows: ${(p) => (p.$small ? 23 : 35)}px;
  padding-top: ${(p) => (p.$small ? 1 : 0)}px;
`;
const BigTool = styled(PlainButton)`
  width: ${(p) => p.$w}px;
  flex-direction: column;
  justify-content: flex-start;
  gap: 1px;
  padding-top: 2px;
  font-size: 11px;
  line-height: 16px;
  white-space: nowrap;
`;
const BigIcon = styled.span`
  height: 34px;
  display: flex;
  align-items: flex-start;
  justify-content: center;
`;

const smallFile = ["tray", "openGreen", "upTeal", "scissors", "black", "unit", "openTeal", "upRed", "gradBox", "grayBox", "docExport", "cycle", "upWhite", "whiteBox", "fitBox"];
const smallAsm = ["asmMove", "asmFrame", "asmRefresh", "asmLink", "asmGold", "asmPlus", "asmRows", "asmCopy", "asmPlusBox"];
const bigGroups = [
  { label: "常用工具", cols: 10, icons: ["qr", "ruler", "cornerLine", "letterA", "ziBlack", "blockSplit", "sheet", "gearTeal", "folderMinus", "folderX", "yi", "angle", "zoomSheet", "ziTeal", "cubeRed", "link", "plateYellow", "folder", "folderPlus", "calc"] },
  { label: "曲线工具", cols: 5, icons: ["ziStar", "crossLines", "cylinder", "slabTeal", "circleGreen", "ziCross", "waves", "slabRed", "lBlocks", "slabGreen"] },
  { label: "变化工具", cols: 5, icons: ["rotateBox", "axesBox", "parallel", "rotateDot", "mirror4", "frames", "axisOrange", "lineSeg", "rotateBoxed", "moveBoxes"] },
  { label: "批量工具", cols: 11, icons: ["notch", "chamferStar", "slabMove", "slabDim", "slabX", "canister", "surface", "shapes", "printX", "barX", "xDim", "squareCross", "chamferWrench", "slabCopy", "slabMirror", "faceX", "twoCols", "plateDot", "stack", "xTeal", "docX"] },
  { label: "分析工具", cols: 9, icons: ["infoBox", "overlap", "orangeInfo", "arcs", "blueCube", "redHex", "orangeSheet", "orangeSheet2", "violetLamp", "purpleInfo", "overlap2", "dimLine", "blueCube2", "rulerTeal", "rulerRed", "dong", "wireSurf"] },
];

const Foot = ({ label, wide }) => (
  <GroupFoot $wide={wide}>
    <span>{label}</span>
    <PlainButton aria-label={`${label} 选项`}><Caret /></PlainButton>
  </GroupFoot>
);
const Tools = ({ names, cols, small: isSmall }) => (
  <IconGrid $cols={cols} $small={isSmall}>
    {names.map((n) => (
      <PlainButton key={n} aria-label={n}><Icon name={n} size={isSmall ? 16 : 24} /></PlainButton>
    ))}
  </IconGrid>
);

function RibbonBar() {
  return (
    <Ribbon>
      <Group $w={48}>
        <GroupBody $center><Tools names={["discSquare", "discList"]} cols={1} /></GroupBody>
        <Foot label="菜..." wide />
      </Group>
      <Group>
        <GroupBody>
          <BigTool $w={53}><BigIcon><Icon name="lock" size={24} h={29} /></BigIcon>部件加密</BigTool>
          <Tools names={smallFile} cols={5} small />
        </GroupBody>
        <Foot label="图档工具" />
      </Group>
      <Group>
        <GroupBody>
          <BigTool $w={75}><BigIcon><Icon name="asmTree" size={34} /></BigIcon>初始化装配树</BigTool>
          <Tools names={smallAsm} cols={3} small />
        </GroupBody>
        <Foot label="装配工具" />
      </Group>
      {bigGroups.map((g) => (
        <Group key={g.label}>
          <GroupBody><Tools names={g.icons} cols={g.cols} /></GroupBody>
          <Foot label={g.label} />
        </Group>
      ))}
      <Group $w={55}>
        <GroupBody $center>
          <BigTool $w={53}>
            <BigIcon><Icon name="kong" size={24} /></BigIcon>
            选择工具
            <Caret />
          </BigTool>
        </GroupBody>
      </Group>
      <Group $rest>
        <GroupBody />
        <Foot label="" wide />
      </Group>
    </Ribbon>
  );
}

/* ---------- selection bar ---------- */

const SelBar = styled.section`
  height: 28px;
  display: flex;
  align-items: center;
  border-bottom: 1px solid #a0a0a0;
`;
const MenuButton = styled(PlainButton)`
  gap: 6px;
  padding: 0 8px 0 13px;
  font-size: 11px;
  font-weight: 500;
  height: 22px;
`;
const SelSep = styled.span`
  width: 1px;
  height: 20px;
  background: #d4d4d4;
  margin: 0 12px 0 0;
  ${(p) => p.$end && css`margin: 0 0 0 6px;`}
`;
const SelectWrap = styled.label`
  width: ${(p) => p.$w}px;
  height: 22px;
  display: flex;
  align-items: center;
  justify-content: flex-end;
  border: 1px solid #b4b4b4;
  padding-right: 5px;
  background: ${(p) => (p.$gray ? "#f0f0f0" : "linear-gradient(270deg, #f0f0f0 17px, #fff 17px)")};
  select {
    flex: 1;
    height: 20px;
    padding: 0 0 0 2px;
    border: 0;
    background: none;
    appearance: none;
    font-size: 11px;
    color: #a3a3a3;
    opacity: 1;
  }
`;
const SelIcon = styled(PlainButton)`
  width: 25px;
  height: 24px;
`;
const FunnelButton = styled(SelIcon)`
  margin: 0 6px 0 3px;
`;
const SelIcons = styled.div`
  display: flex;
  align-items: center;
  margin-left: 4px;
`;
const CaretButton = styled(PlainButton)`
  width: 14px;
  height: 24px;
  margin-left: auto;
  ${(p) => p.$end && css`margin-right: 2px;`}
`;
const selIcons = ["grayBlocks", "chainGray", "noEntry", "solidOrange", "sheetOrange", "faceOrange", "edgeOrange", "curveBlue", "pointsBlue", "grayFilter", "grayBracket", "grayCubePlus", "grayRectPlus"];

function SelectionBar() {
  return (
    <SelBar>
      <MenuButton>
        <svg width="11" height="10" aria-hidden="true"><path d="M0 1h11M0 5h11M0 9h11" stroke="#333" /></svg>
        <span>菜单(<u>M</u>)</span>
        <Caret />
      </MenuButton>
      <SelSep />
      <SelectWrap $w={149}>
        <select aria-label="类型过滤器" disabled><option>实体</option></select>
        <Caret $color="#999" />
      </SelectWrap>
      <FunnelButton aria-label="重置过滤器"><Icon name="funnel" size={18} /></FunnelButton>
      <SelectWrap $w={156} $gray>
        <select aria-label="选择范围" disabled><option>整个装配</option></select>
        <Caret $color="#999" />
      </SelectWrap>
      <SelIcons>
        {selIcons.map((n) => <SelIcon key={n} aria-label={n}><Icon name={n} size={18} /></SelIcon>)}
        <CaretButton aria-label="更多"><Caret /></CaretButton>
        <SelIcon aria-label="着色"><Icon name="grayCubeFlat" size={18} /></SelIcon>
        <SelIcon aria-label="截面"><Icon name="cubeCut" size={18} /></SelIcon>
      </SelIcons>
      <SelSep $end />
      <CaretButton $end aria-label="选项"><Caret /></CaretButton>
    </SelBar>
  );
}

/* ---------- resource bar + navigator ---------- */

const Body = styled.main`
  flex: 1;
  min-height: 0;
  display: flex;
  border-bottom: 1px solid #a0a0a0;
`;
const ResourceBar = styled.nav`
  width: 37px;
  background: #dcdcdc;
  border-right: 1px solid #a0a0a0;
  display: flex;
  flex-direction: column;
  align-items: stretch;
`;
const ResButton = styled(PlainButton)`
  height: 44px;
  padding-left: ${(p) => (p.$active ? 0 : 4)}px;
  ${(p) => p.$top && css`height: 32px; padding: 0;`}
  ${(p) =>
    p.$active &&
    css`
      background: #fff;
      border: 1px solid #a0a0a0;
      border-right: 0;
      margin: 0 -1px 0 3px;
    `}
`;
const Navigator = styled.aside`
  width: 322px;
  display: flex;
  flex-direction: column;
  padding: 0 9px 6px 8px;
`;
const NavHeader = styled.header`
  height: 27px;
  display: flex;
  align-items: center;
  gap: 3px;
  padding: 0 2px 2px 0;
  h2 { margin: 0; flex: 1; font: 500 12px/20px ${sans}; }
`;
const TreeFrame = styled.div`
  flex: 1;
  min-height: 0;
  display: flex;
  flex-direction: column;
  border: 1px solid #cfcfcf;
`;
const TreeClip = styled.div`
  flex: 1;
  min-height: 0;
  overflow: hidden;
`;
const Col = styled.col`
  width: ${(p) => (p.$w ? `${p.$w}px` : "auto")};
`;
const Tree = styled.table`
  width: 100%;
  table-layout: fixed;
  border-collapse: separate;
  border-spacing: 0;
  th {
    height: 21px;
    padding: 2px 0 0 6px;
    text-align: left;
    font-weight: 400;
    background: #f0f0f0;
    border-right: 1px solid #cfcfcf;
    border-bottom: 1px solid #cfcfcf;
  }
  td {
    height: 20px;
    padding: 0;
    border-right: 1px solid #e6e6e6;
    border-bottom: 1px solid #e6e6e6;
  }
  th:last-child, td:last-child { border-right: 0; }
  tbody tr:nth-child(even) td { background: #fafafa; }
`;
const SortMark = styled.span`
  display: inline-block;
  margin-left: 18px;
  vertical-align: 1px;
  border: 5px solid transparent;
  border-top-width: 0;
  border-bottom-color: #111;
`;
const Node = styled.div`
  height: 19px;
  display: flex;
  align-items: center;
  white-space: nowrap;
  overflow: hidden;
  line-height: 19px;
  color: ${(p) => (p.$dim ? "#a0a0a0" : "#111")};
  font-weight: ${(p) => (p.$bold ? 700 : 400)};
  > span { padding-left: 3px; }
`;
const Mark = styled.div`
  height: 19px;
  display: flex;
  align-items: center;
  justify-content: center;
`;
const HScroll = styled.div`
  height: 17px;
  background: #f0f0f0;
  display: flex;
  align-items: center;
  padding: 0 51px 0 17px;
  &::before { content: ""; flex: 1; height: 2px; background: #858585; }
`;
const Splitter = styled.div`
  height: 6px;
  margin: 2px 0;
  background: #dcdcdc;
  border: 1px solid #a8a8a8;
`;
const Fold = styled(PlainButton)`
  height: 24px;
  justify-content: flex-start;
  gap: 7px;
  padding: 2px 0 0 11px;
  border-bottom: 2px solid #d0d0d0;
  font-size: 14px;
  line-height: 19px;
  color: #006489;
  &::before {
    content: "";
    border: 4px solid transparent;
    border-left: 5px solid #006489;
    border-right-width: 0;
  }
`;

const Connector = ({ child, box, last, first }) => {
  const w = child ? 38 : 19;
  const x = child ? 28.5 : 9.5;
  const dash = { stroke: "#8a8a8a", strokeDasharray: "1 1" };
  return (
    <svg width={w} height="20" aria-hidden="true">
      <path d={`M${x} ${first ? 10 : 0}V${last ? 10 : 20}M${x} 10.500H${w}`} {...dash} />
      {box && (
        <g>
          <rect x={x - 4} y="6.500" width="8" height="8" fill="#fff" stroke="#c4c4c4" />
          <path d={`M${x - 2.5} 10.500h5${box === "+" ? `M${x} 8v5` : ""}`} stroke="#000" />
        </g>
      )}
    </svg>
  );
};

const sk = (n, s = "_0...") => ({ child: true, icons: ["tEyeOff", "tSketch"], text: `草图 (${n}) "SKETCH${s}`, dim: true, ok: true });
const ex = (n) => ({ child: true, icons: ["tEye", "tExtrude"], text: `拉伸 (${n})`, ok: true });
const nodes = [
  { icons: ["tClock"], text: "历史记录建模模式", first: true },
  { icons: ["tView"], text: "模型视图", box: "+" },
  { icons: ["tCheck", "tCamera"], text: "摄像机", box: "+" },
  { icons: ["tCheck", "tDraw"], text: "图纸", box: "+" },
  { icons: ["tGroup"], text: "组", box: "+" },
  { icons: ["tFolder"], text: "非时间戳记几何体", box: "+" },
  { icons: ["tBall", "tModel"], text: "模型历史记录", box: "-", ok: true, last: true },
  { child: true, icons: ["tEyeOff", "tCsys"], text: "基准坐标系 (0)", dim: true, ok: true },
  sk(1), ex(2), sk(3), ex(4), sk(5),
  { child: true, icons: ["tEye", "tHole"], text: "Ø9 沉头孔 (6)", ok: true },
  { child: true, icons: ["tEye", "tPattern"], text: "阵列特征 [圆形] (7)", box: "+", ok: true },
  { child: true, icons: ["tEye", "tHole"], text: "Ø52 沉头孔 (8)", ok: true },
  sk(9), ex(10),
  { child: true, icons: ["tEyeOff", "tPlane"], text: "基准平面 (12)", dim: true, ok: true },
  sk(13, "_..."),
  { child: true, icons: ["tEye", "tRevolve"], text: "旋转 (14)", ok: true },
  { child: true, icons: ["tEye", "tSubdiv"], text: "细分体 (15)", bold: true, current: true, ok: true, last: true },
];
const blanks = Array.from({ length: 12 }, (_, i) => i);
const resources = ["navBlocks", "navConstraint", "bracket", "books", "bracketDim", "measure", "info", "web", "clock", "wrench", "wizard", "flow"];

function PartNavigator() {
  return (
    <>
      <ResourceBar>
        <ResButton $top aria-label="设置"><Icon name="gear" size={18} /></ResButton>
        {resources.map((n) => (
          <ResButton key={n} $active={n === "bracket"} aria-label={n}><Icon name={n} size={24} /></ResButton>
        ))}
      </ResourceBar>
      <Navigator>
        <NavHeader>
          <Icon name="bracket" size={15} />
          <h2>部件导航器</h2>
          <PlainButton aria-label="最大化">
            <svg width="12" height="11"><path d="M.500 .500h11v10H.500z M0 1h12" fill="none" stroke="#000" /></svg>
          </PlainButton>
        </NavHeader>
        <TreeFrame>
          <TreeClip>
            <Tree>
              <colgroup><Col $w={196} /><Col $w={24} /><Col $w={24} /><Col /></colgroup>
              <thead>
                <tr><th>名称<SortMark /></th><th>当</th><th>最</th><th>附注</th></tr>
              </thead>
              <tbody>
                {nodes.map((n) => (
                  <tr key={n.text}>
                    <td>
                      <Node $dim={n.dim} $bold={n.bold}>
                        <Connector {...n} />
                        {n.icons.map((k) => <Icon key={k} name={k} size={16} />)}
                        <span>{n.text}</span>
                      </Node>
                    </td>
                    <td>{n.current && <Mark><Icon name="tCurrent" size={15} /></Mark>}</td>
                    <td>{n.ok && <Mark><Icon name="tCheck" size={16} /></Mark>}</td>
                    <td />
                  </tr>
                ))}
                {blanks.map((b) => <tr key={b}><td /><td /><td /><td /></tr>)}
              </tbody>
            </Tree>
          </TreeClip>
          <HScroll />
        </TreeFrame>
        <Splitter />
        {["搜索", "相关性", "细节", "预览"].map((t) => <Fold key={t}>{t}</Fold>)}
      </Navigator>
    </>
  );
}

/* ---------- work area ---------- */

const Work = styled.section`
  flex: 1;
  min-width: 0;
  display: flex;
  flex-direction: column;
  border-left: 1px solid #a0a0a0;
`;
const DocTabs = styled.div`
  height: 27px;
  display: flex;
  border-bottom: 2px solid ${DEEP};
`;
const DocTab = styled.div`
  display: flex;
  align-items: center;
  gap: 6px;
  width: 150px;
  padding-left: 6px;
  background: ${DEEP};
  color: #fff;
  span { white-space: nowrap; }
`;
const Canvas = styled.div`
  flex: 1;
  min-height: 0;
  position: relative;
  border: solid #d0d0d0;
  border-width: 0 1px 1px 0;
`;
const Model = styled.svg`
  position: absolute;
  left: 460px;
  top: 165px;
`;
const Wire = styled.svg`
  position: absolute;
  left: 79px;
  top: 700px;
`;
const Dialog = styled.form`
  position: absolute;
  left: 0;
  top: 0;
  width: 322px;
  background: #efefef;
  border: solid #cfcfcf;
  border-width: 0 1px 1px;
`;
const DialogTitle = styled.header`
  height: 24px;
  margin: 0 -1px;
  padding: 0 5px 0 6px;
  display: flex;
  align-items: center;
  background: ${DEEP};
  color: #fff;
  h2 { flex: 1; margin: 0 0 0 8px; font: 400 14px/24px ${sans}; }
  button { width: 20px; height: 22px; margin-left: 3px; font: 700 16px/22px ${sans}; color: #fff; }
`;
const Sections = styled.div`
  display: flex;
  flex-direction: column;
  gap: 3px;
  padding: 5px 5px 0;
`;
const Section = styled.section`
  display: flex;
  flex-direction: column;
  gap: 2px;
  padding: 0 8px 7px;
  background: #fff;
  border: 1px solid #cdcdcd;
  h3 {
    margin: 0 0 6px;
    height: 22px;
    display: flex;
    align-items: center;
    gap: 7px;
    font: 700 13px/20px ${sans};
    color: #006489;
  }
  h3::before {
    content: "";
    border: 4px solid transparent;
    border-top-color: #006489;
    border-bottom-width: 0;
    margin-left: -1px;
  }
`;
const WideButton = styled.button`
  height: 29px;
  padding: 0;
  border: 1px solid #777;
  border-radius: 0;
  background: #fff;
  font-size: 12px;
  line-height: 16px;
`;
const RadioBox = styled.div`
  width: 260px;
  height: 29px;
  display: flex;
  align-items: center;
  gap: 15px;
  padding: 0 5px;
  border: 1px solid #cdcdcd;
  border-radius: 1px;
`;
const Radio = styled.label`
  display: flex;
  align-items: center;
  gap: ${(p) => (p.$wide ? 2 : 4)}px;
  white-space: nowrap;
  input {
    appearance: none;
    width: 13px;
    height: 13px;
    border: 1px solid #666;
    border-radius: 50%;
    background: #f3f3f3;
  }
  input:checked {
    border: 4px solid #005fb8;
    background: #fff;
  }
  span {
    line-height: 18px;
    ${(p) => p.$wide && css`padding: 0 1px; border: 1px dotted transparent;`}
    ${(p) => p.$focus && css`border-color: #000;`}
  }
`;
const PointBox = styled.fieldset`
  width: 215px;
  height: 97px;
  margin: 0 0 0 39px;
  padding: 4px 0 0 5px;
  border: 1px solid #cdcdcd;
  border-radius: 1px;
  legend {
    float: left;
    width: 100%;
    padding: 0 0 3px 3px;
    line-height: 16px;
    color: #006489;
  }
`;
const PointGrid = styled.div`
  width: 100%;
  clear: both;
  display: grid;
  grid-template-columns: repeat(3, 69px);
  grid-auto-rows: 23px;
`;
const DialogFoot = styled.footer`
  display: flex;
  justify-content: flex-end;
  padding: 10px 15px 10px 0;
`;
const CloseButton = styled.button`
  width: 54px;
  height: 25px;
  padding: 0;
  border: 1px solid ${DEEP};
  background: #efefef;
  color: #006489;
  line-height: 16px;
`;
const Watermark = styled.div`
  position: fixed;
  right: 4px;
  bottom: 9px;
  font: 300 38px/52px "Noto Sans CJK SC", sans-serif;
  color: #dedede;
  text-shadow: 1px 1px 1px #8f8f8f;
`;

const points = ["左上点", "中上点", "右上点", "左中点", "中心点", "右中点", "左下点", "中下点", "右下点"];

function TransformDialog() {
  return (
    <Dialog onSubmit={(e) => e.preventDefault()}>
      <DialogTitle>
        <Icon name="gearWhite" size={15} />
        <h2>变化实体</h2>
        <PlainButton type="button" aria-label="帮助">?</PlainButton>
        <PlainButton type="button" aria-label="关闭对话框"><Icon name="close" size={20} /></PlainButton>
      </DialogTitle>
      <Sections>
        <Section>
          <h3>参考坐标</h3>
          <RadioBox>
            <Radio $wide $focus><input type="radio" name="csys" defaultChecked /><span>绝对坐标（abs）</span></Radio>
            <Radio $wide><input type="radio" name="csys" /><span>工作坐标（wcs）</span></Radio>
          </RadioBox>
        </Section>
        <Section>
          <h3>摆正实体</h3>
          <WideButton type="button">根据面摆正</WideButton>
        </Section>
        <Section>
          <h3>移动到abs原点</h3>
          <PointBox>
            <legend>体上点</legend>
            <PointGrid>
              {points.map((p, i) => (
                <Radio key={p}><input type="radio" name="point" defaultChecked={i === 0} /><span>{p}</span></Radio>
              ))}
            </PointGrid>
          </PointBox>
          {["顶部点移动到abs原点", "中间点移动到abs原点", "底部点移动到abs原点"].map((t) => <WideButton type="button" key={t}>{t}</WideButton>)}
        </Section>
        <Section>
          <h3>移动到点</h3>
          {["abs原点移动到wcs原点", "wcs原点移动到abs原点", "体中心移动到指定点"].map((t) => <WideButton type="button" key={t}>{t}</WideButton>)}
        </Section>
        <Section>
          <h3>旋转变化</h3>
          {["绕X旋转90°", "绕Y旋转90°", "绕Z旋转90°"].map((t) => <WideButton type="button" key={t}>{t}</WideButton>)}
        </Section>
      </Sections>
      <DialogFoot><CloseButton type="button">关闭</CloseButton></DialogFoot>
    </Dialog>
  );
}

const Stops = ({ list }) => list.map(([o, c]) => <stop key={o} offset={o} stopColor={c} />);

function Flange() {
  const edge = { fill: "none", stroke: "#2e2a24", strokeWidth: 2.5 };
  return (
    <Model width="250" height="490" viewBox="0 0 750 1470" role="img" aria-label="法兰剖切模型">
      <defs>
        <linearGradient id="ring" x1="0" y1="0" x2="0" y2="1">
          <Stops list={[[0, "#8a5200"], [0.2, "#965a00"], [0.45, "#d98300"], [0.68, "#ffc122"], [0.85, "#ffa808"], [1, "#ff9c00"]]} />
        </linearGradient>
        <linearGradient id="bore" x1="0" y1="0" x2="0" y2="1">
          <Stops list={[[0, "#9a5d00"], [0.35, "#f29100"], [0.65, "#ffc022"], [1, "#ff9a00"]]} />
        </linearGradient>
        <linearGradient id="rim" x1="0" y1="0" x2="1" y2="0">
          <Stops list={[[0, "#ff9900"], [1, "#f28f00"]]} />
        </linearGradient>
      </defs>
      <path d="M184 106C225 72 270 56 310 59L430 78 308 125z" fill="url(#rim)" stroke={edge.stroke} strokeWidth="2.500" />
      <path d="M89 348C120 322 160 317 194 325V368z" fill="#f99400" stroke={edge.stroke} strokeWidth="2.500" />
      <path d="M308 125C345 92 388 78 430 78C505 84 567 150 607 262C643 362 663 470 663 590C663 770 628 960 556 1140C505 1265 440 1370 371 1424V1362L292 1322L250 1312L256 1245L232 1150L128 1083C165 1052 190 1015 205 975C245 905 268 820 275 740C282 650 284 560 264 532C250 511 232 513 212 528L200 400L194 275C206 258 210 235 208 205L240 180L312 190z" fill="#e68a00" />
      <path d="M308 125C345 92 388 78 430 78C505 84 567 150 607 262C643 362 663 470 663 590C663 770 628 960 556 1140C505 1265 440 1370 371 1424" {...edge} />
      {/* outer groove */}
      <path d="M385 381C462 372 523 510 523 670C523 880 450 1090 358 1141L335 1137C430 1060 497 850 497 650C497 500 445 396 395 381z" fill="url(#ring)" />
      <path d="M325 405C345 388 365 381 385 381C462 372 523 510 523 670C523 880 450 1090 358 1141M335 1137C430 1060 497 850 497 650C497 500 445 396 395 381" {...edge} />
      {/* recess floor and inner ring */}
      <path d="M304 547C320 535 335 530 350 532C380 545 389 600 388 690C385 820 350 920 322 968L300 993L290 1077L248 1069L230 980L300 700z" fill="#f49000" />
      <path d="M345 531C405 535 428 610 428 690C426 830 385 940 325 995C365 920 388 820 388 690C389 600 380 550 345 531z" fill="url(#ring)" />
      <path d="M304 547C320 535 335 530 350 532C405 535 428 610 428 690C426 830 385 940 327 994M350 532C395 550 404 620 404 690C400 810 365 910 322 968M385 580C390 620 389 660 388 690C385 820 350 900 318 980" {...edge} />
      <path d="M300 993C280 1040 265 1058 248 1069L290 1077z" fill="#ffa000" />
      <path d="M318 975C295 1030 272 1060 250 1072" {...edge} />
      {/* bore */}
      <path d="M243 515C270 515 281 560 280 640C278 780 255 890 205 972L228 981C290 920 325 810 328 690C328 610 310 550 285 545L268 520z" fill="url(#ring)" />
      <path d="M212 528C222 516 232 514 243 515C270 515 281 560 279 640C276 700 274 740 270 790C255 880 225 940 205 972C190 1015 165 1052 126 1083" {...edge} />
      <path d="M268 530C292 570 302 630 302 690C299 800 260 920 215 970M285 545C315 560 328 620 328 690C325 810 288 930 230 981" {...edge} />
      <path d="M205 972C190 1015 165 1052 126 1083L203 1097z" fill="#ff9d05" />
      <path d="M220 452L260 453L283 545L262 522C245 511 228 514 209 530z" fill="#d67f00" />
      {/* counterbores */}
      <path d="M241 182L314 190C330 180 347 200 347 245C347 280 335 312 320 319L245 308L243 283L194 275C208 255 210 232 207 203L240 206z" fill="url(#bore)" />
      <path d="M314 190C330 180 347 200 347 245C347 280 335 312 320 319M245 203C265 212 266 262 245 285M270 188C278 230 270 280 247 306M207 205C211 235 207 255 194 275" {...edge} />
      <path d="M290 1222L360 1230C380 1222 396 1245 396 1285C396 1320 384 1352 369 1360L294 1348L292 1323L246 1315C258 1295 258 1270 256 1243L289 1244z" fill="url(#bore)" />
      <path d="M360 1230C380 1222 396 1245 396 1285C396 1320 384 1352 369 1360M292 1243C314 1252 314 1300 293 1322M318 1228C328 1270 318 1320 296 1346M256 1243C259 1275 257 1298 246 1315" {...edge} />
      {/* bolt holes */}
      <g fill="url(#bore)" stroke="#2e2a24" strokeWidth="2.500">
        <ellipse cx="551" cy="341" rx="31" ry="71" transform="rotate(7 551 341)" />
        <ellipse cx="576" cy="861" rx="31" ry="71" transform="rotate(7 576 861)" />
      </g>
      <path d="M360 70C450 130 545 360 536 660C533 860 480 1060 415 1165M375 410C400 480 404 540 404 620" fill="none" stroke="#c9a06a" strokeWidth="1.500" strokeDasharray="3 14" />
      {/* cut faces */}
      <g fill="#a9cf84" stroke="#c8ff96" strokeWidth="4.500" strokeLinejoin="round">
        <path d="M184 106L311 125L313 190L240 180V206L187 197z" />
        <path d="M192 275L243 283L245 308L320 320L323 407L300 405L304 548L283 545L260 453L220 452L207 530L179 525L174 405L89 393V348L192 365z" />
        <path d="M201 976L228 981L248 1069L290 1077L301 993L326 995L332 1139L359 1143V1230L289 1220V1244L238 1240L233 1145L122 1128V1086L203 1097z" />
        <path d="M240 1315L292 1323L294 1348L369 1360V1424L244 1408z" />
      </g>
      <path d="M137 1117l18-14M255 1115l17-12M246 1404l44-40M210 352l40 45M205 350c40-18 80-20 108 0" fill="none" stroke="#8fae74" strokeWidth="1.500" strokeDasharray="4 8" />
      {/* work coordinate system */}
      <path d="M213 745L200 650L205 598L216 650z" fill="#0a32c8" />
      <path d="M218 752L245 718L292 696L270 724z" fill="#1f9a3c" />
      <path d="M224 759L300 762L366 778L300 776z" fill="#d62a2a" />
      <g fontFamily="Liberation Sans" fontSize="37">
        <text x="220" y="595" fill="#2a50f0">ZC</text>
        <text x="235" y="686" fill="#2a9a3a">YC</text>
        <text x="313" y="822" fill="#d83a3a">XC</text>
      </g>
    </Model>
  );
}

const HiddenDefs = styled.svg`
  position: absolute;
`;
const Defs = () => (
  <HiddenDefs width="0" height="0" aria-hidden="true">
    <defs>
      <linearGradient id="skyGrad" x1="0" y1="0" x2="0" y2="1"><Stops list={[[0, "#93bde0"], [1, "#e6e6e6"]]} /></linearGradient>
      <linearGradient id="goldGrad" x1="0" y1="0" x2="1" y2="1"><Stops list={[[0, "#f08a1d"], [0.5, "#fdc24a"], [1, "#e07f18"]]} /></linearGradient>
      <radialGradient id="ballGrad" cx=".35" cy=".3" r=".8"><Stops list={[[0, "#b8ffb8"], [0.4, "#2fdc3c"], [1, "#0f9a20"]]} /></radialGradient>
      <radialGradient id="steelGrad" cx=".4" cy=".35" r=".7"><Stops list={[[0, "#f6f6f6"], [1, "#777"]]} /></radialGradient>
    </defs>
  </HiddenDefs>
);

const StatusBar = styled.footer`
  height: 20px;
`;

export default function App() {
  return (
    <Shell>
      <Global />
      <Defs />
      <AppHeader />
      <RibbonBar />
      <SelectionBar />
      <Body>
        <PartNavigator />
        <Work>
          <DocTabs>
            <DocTab>
              <Icon name="bracket" size={14} />
              <span>旋转202478.prt</span>
              <Icon name="docPen" size={12} />
              <PlainButton aria-label="关闭文件"><Icon name="closeGray" size={10} /></PlainButton>
            </DocTab>
          </DocTabs>
          <Canvas>
            <Wire width="60" height="28" aria-hidden="true">
              <path d="M.500 0v20l37 6 20-16M37.500 0v26" fill="none" stroke="#aaa" />
            </Wire>
            <Flange />
            <TransformDialog />
          </Canvas>
        </Work>
      </Body>
      <StatusBar />
      <Watermark>CSDN @山涧果子</Watermark>
    </Shell>
  );
}
